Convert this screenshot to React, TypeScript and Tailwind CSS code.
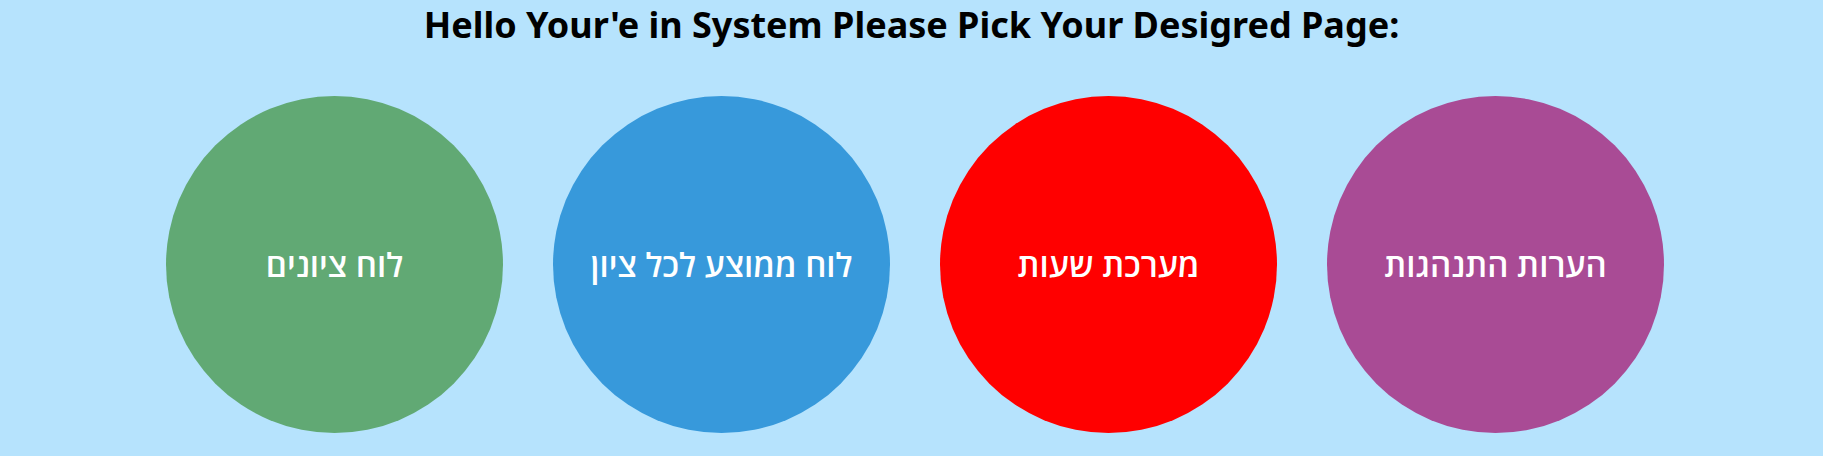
const pages = [
  { label: "לוח ציונים", color: "bg-[#61a974]" },
  { label: "לוח ממוצע לכל ציון", color: "bg-[#3799db]" },
  { label: "מערכת שעות", color: "bg-[#ff0000]" },
  { label: "הערות התנהגות", color: "bg-[#a94b95]" },
];

const App = () => {
  return (
    <div className="min-h-screen w-full bg-[#b6e3fd]">
      <h1 className="text-center font-['Noto_Sans',sans-serif] text-[36px] font-bold leading-[50px] text-black">
        Hello Your'e in System Please Pick Your Desigred Page:
      </h1>
      <div className="mt-[46px] flex justify-center gap-[50px] pl-[7px]">
        {pages.map((page) => (
          <div
            key={page.label}
            dir="rtl"
            className={`${page.color} flex h-[337px] w-[337px] cursor-pointer items-center justify-center rounded-full font-['Open_Sans',sans-serif] text-[33px] font-semibold text-white`}
          >
            {page.label}
          </div>
        ))}
      </div>
    </div>
  );
};

export default App;
